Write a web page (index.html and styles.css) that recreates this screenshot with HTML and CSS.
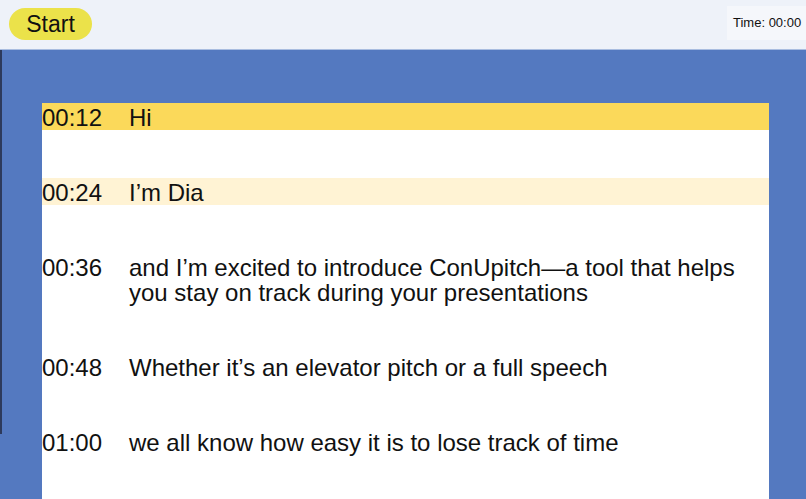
FILE: index.html
```html
<!DOCTYPE html>
<html>
<head>
<meta charset="utf-8">
<link rel="stylesheet" href="styles.css">
</head>
<body>
<header class="topbar">
  <button class="start-btn">Start</button>
  <div class="timer">Time: 00:00</div>
</header>
<main class="stage">
  <div class="edge"></div>
  <section class="script">
    <div class="line current"><span class="ts">00:12</span><span class="txt">Hi</span></div>
    <div class="line next"><span class="ts">00:24</span><span class="txt">I’m Dia</span></div>
    <div class="line"><span class="ts">00:36</span><span class="txt">and I’m excited to introduce ConUpitch—a tool that helps you stay on track during your presentations</span></div>
    <div class="line"><span class="ts">00:48</span><span class="txt">Whether it’s an elevator pitch or a full speech</span></div>
    <div class="line"><span class="ts">01:00</span><span class="txt">we all know how easy it is to lose track of time</span></div>
  </section>
</main>
</body>
</html>
```
FILE: styles.css
```css
* { box-sizing: border-box; }
html, body { margin: 0; padding: 0; height: 100%; overflow: hidden; }
body {
  font-family: "Liberation Sans", Arial, sans-serif;
  color: #111;
  background: #5479c0;
  display: flex;
  flex-direction: column;
}
.topbar {
  height: 50px;
  flex: none;
  background: #eef2f9;
  border-bottom: 1px solid #a9bde0;
  display: flex;
  align-items: flex-start;
  justify-content: space-between;
  padding: 8px 0 0 9px;
}
.start-btn {
  font-family: "Liberation Sans", Arial, sans-serif;
  font-size: 23px;
  color: #111;
  background: #ebe24a;
  border: none;
  border-radius: 16px;
  width: 83px;
  height: 32px;
  padding: 0;
  line-height: 32px;
}
.timer {
  margin-top: -2px;
  background: #f5f7fb;
  font-size: 13px;
  height: 34px;
  line-height: 34px;
  padding: 0 0 0 6px;
  width: 79px;
}
.stage {
  flex: 1;
  position: relative;
  padding: 53px 37px 0 42px;
}
.edge {
  position: absolute;
  left: 0;
  top: 0;
  width: 2px;
  height: 384px;
  background: #2d3a5c;
}
.script {
  background: #fff;
  height: 100%;
}
.line {
  display: flex;
  font-size: 24px;
  line-height: 25px;
  padding-top: 2px;
  margin-bottom: 48px;
}
.line.current { background: #fbd95a; }
.line.next { background: #fff3d4; }
.ts { width: 87px; flex: none; }
.txt { flex: 1; padding-right: 20px; }
```
